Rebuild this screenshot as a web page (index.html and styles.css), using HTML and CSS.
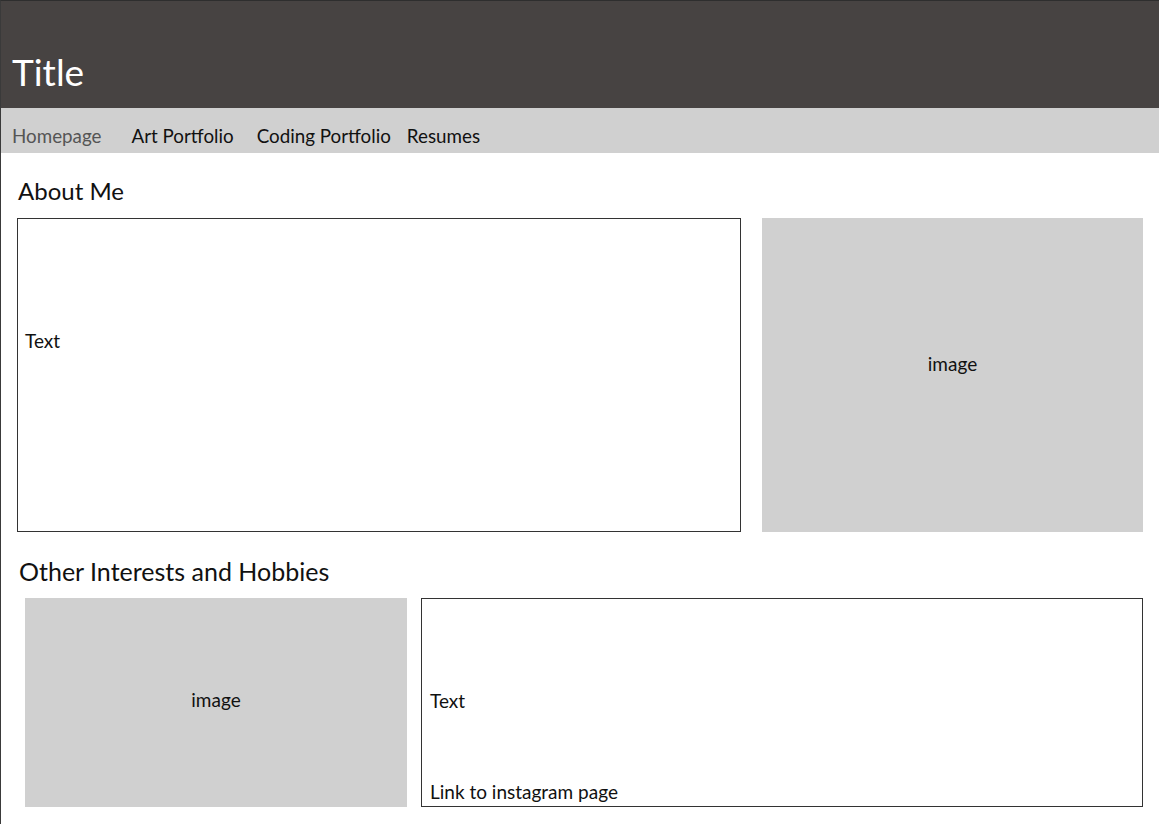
FILE: index.html
```html
<!DOCTYPE html>
<html lang="en">
<head>
<meta charset="utf-8">
<title>Title</title>
<link rel="stylesheet" href="styles.css">
</head>
<body>
<div class="page">
  <header class="masthead">
    <h1 class="site-title">Title</h1>
  </header>
  <nav class="nav">
    <a class="nav-link nav-link--current" href="#">Homepage</a>
    <a class="nav-link nav-link--art" href="#">Art Portfolio</a>
    <a class="nav-link nav-link--coding" href="#">Coding Portfolio</a>
    <a class="nav-link" href="#">Resumes</a>
  </nav>
  <main class="content">
    <section class="about">
      <h2 class="section-title">About Me</h2>
      <div class="about-row">
        <div class="textbox about-text"><p>Text</p></div>
        <div class="imagebox about-image">image</div>
      </div>
    </section>
    <section class="hobbies">
      <h2 class="section-title section-title--hobbies">Other Interests and Hobbies</h2>
      <div class="hobbies-row">
        <div class="imagebox hobbies-image">image</div>
        <div class="textbox hobbies-text">
          <p class="hobbies-para">Text</p>
          <a class="insta-link" href="#">Link to instagram page</a>
        </div>
      </div>
    </section>
  </main>
</div>
</body>
</html>
```
FILE: styles.css
```css
* { box-sizing: border-box; }
html, body { margin: 0; padding: 0; }
body {
  font-family: "Lato", "Noto Sans", sans-serif;
  color: #111;
  background: #fff;
  width: 1159px;
  height: 824px;
  overflow: hidden;
}
.page {
  border-left: 1px solid #3a3a3a;
  border-top: 1px solid #2e2e2e;
  height: 824px;
}
.masthead {
  background: #474342;
  height: 107px;
  display: flex;
  align-items: flex-end;
  padding: 0 0 18px 11px;
}
.site-title {
  margin: 0;
  color: #fff;
  font-weight: 400;
  font-size: 37px;
  line-height: 1;
}
.nav {
  background: #d0d0d0;
  height: 45px;
  display: flex;
  align-items: center;
  padding: 12px 0 0 11px;
}
.nav-link {
  color: #111;
  text-decoration: none;
  font-size: 18.8px;
  line-height: 1;
}
.nav-link--current { color: #555; margin-right: 30px; }
.nav-link--art { margin-right: 23px; }
.nav-link--coding { margin-right: 16px; }
.content {
  padding: 0 15px 0 16px;
}
.section-title {
  margin: 0;
  font-weight: 400;
  font-size: 24px;
  line-height: 30px;
  padding: 23px 0 12px 1px;
}
.section-title--hobbies { font-size: 25px; padding: 24px 0 12px 2px; }
.about-row {
  display: flex;
  gap: 21px;
  height: 314px;
}
.textbox {
  border: 1px solid #333;
  font-size: 19px;
}
.textbox p { margin: 0; }
.imagebox {
  background: #d0d0d0;
  font-size: 19px;
  display: flex;
  align-items: center;
  justify-content: center;
}
.about-text {
  width: 724px;
  padding: 110px 0 0 7px;
}
.about-image {
  width: 381px;
  padding-bottom: 24px;
}
.hobbies-row {
  display: flex;
  gap: 14px;
  height: 209px;
  padding-left: 8px;
}
.hobbies-image { width: 382px; padding-bottom: 6px; }
.hobbies-text {
  width: 722px;
  display: flex;
  flex-direction: column;
  padding: 90px 0 3px 8px;
}
.hobbies-para { flex: 1; }
.insta-link { color: #111; text-decoration: none; }
```
